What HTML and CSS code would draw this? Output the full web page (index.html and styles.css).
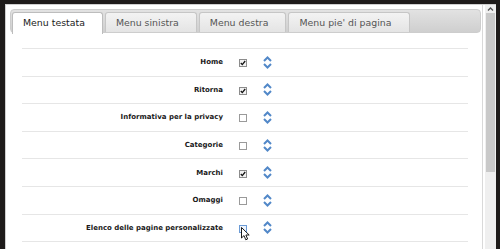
FILE: index.html
```html
<!DOCTYPE html>
<html>
<head>
<meta charset="utf-8">
<link rel="stylesheet" href="styles.css">
</head>
<body>
<div class="dialog">
  <div class="content">
    <div class="tabs">
      <ul class="nav">
        <li class="tab active">Menu testata</li>
        <li class="tab">Menu sinistra</li>
        <li class="tab">Menu destra</li>
        <li class="tab">Menu pie' di pagina</li>
      </ul>
      <div class="panel">
        <div class="row"><span class="label">Home</span><span class="cb"><svg viewBox="0 0 6 6" width="6" height="6"><polyline points="0.8,3 2.3,4.6 5.2,1" /></svg></span><span class="arrows"><svg viewBox="0 0 9 13" width="9" height="13"><polyline points="1,5 4.5,1.5 8,5"/><polyline points="1,8 4.5,11.5 8,8"/></svg></span></div>
        <div class="row"><span class="label">Ritorna</span><span class="cb"><svg viewBox="0 0 6 6" width="6" height="6"><polyline points="0.8,3 2.3,4.6 5.2,1" /></svg></span><span class="arrows"><svg viewBox="0 0 9 13" width="9" height="13"><polyline points="1,5 4.5,1.5 8,5"/><polyline points="1,8 4.5,11.5 8,8"/></svg></span></div>
        <div class="row"><span class="label">Informativa per la privacy</span><span class="cb empty"></span><span class="arrows"><svg viewBox="0 0 9 13" width="9" height="13"><polyline points="1,5 4.5,1.5 8,5"/><polyline points="1,8 4.5,11.5 8,8"/></svg></span></div>
        <div class="row"><span class="label">Categorie</span><span class="cb empty"></span><span class="arrows"><svg viewBox="0 0 9 13" width="9" height="13"><polyline points="1,5 4.5,1.5 8,5"/><polyline points="1,8 4.5,11.5 8,8"/></svg></span></div>
        <div class="row"><span class="label">Marchi</span><span class="cb"><svg viewBox="0 0 6 6" width="6" height="6"><polyline points="0.8,3 2.3,4.6 5.2,1" /></svg></span><span class="arrows"><svg viewBox="0 0 9 13" width="9" height="13"><polyline points="1,5 4.5,1.5 8,5"/><polyline points="1,8 4.5,11.5 8,8"/></svg></span></div>
        <div class="row"><span class="label">Omaggi</span><span class="cb empty"></span><span class="arrows"><svg viewBox="0 0 9 13" width="9" height="13"><polyline points="1,5 4.5,1.5 8,5"/><polyline points="1,8 4.5,11.5 8,8"/></svg></span></div>
        <div class="row"><span class="label">Elenco delle pagine personalizzate</span><span class="cb empty hover"><svg class="cursor" viewBox="0 0 10 15" width="10" height="15"><path d="M0.5,0.5 L0.5,11 L3,8.6 L4.8,12.8 L6.6,12 L4.9,8 L8.2,8 Z"/></svg></span><span class="arrows"><svg viewBox="0 0 9 13" width="9" height="13"><polyline points="1,5 4.5,1.5 8,5"/><polyline points="1,8 4.5,11.5 8,8"/></svg></span></div>
        <div class="row"><span class="label"></span><span class="cb empty"></span><span class="arrows"><svg viewBox="0 0 9 13" width="9" height="13"><polyline points="1,5 4.5,1.5 8,5"/><polyline points="1,8 4.5,11.5 8,8"/></svg></span></div>
      </div>
    </div>
  </div>
  <div class="scrollbar">
    <div class="sb-up"><svg viewBox="0 0 7 4" width="7" height="4"><polyline points="1,3.5 3.5,1 6,3.5"/></svg></div>
    <div class="sb-thumb"></div>
  </div>
</div>
</body>
</html>
```

FILE: styles.css
```css
html, body {
  margin: 0;
  padding: 0;
}
body {
  background: #1e1b1a;
  height: 249px;
  overflow: hidden;
  font-family: "DejaVu Sans", Verdana, sans-serif;
}
.dialog {
  margin: 4px 4px 0 5px;
  height: 245px;
  background: #fff;
  border-left: 1px solid #cfcfcf;
  border-top: 1px solid #cfcfcf;
  box-sizing: border-box;
  display: flex;
  overflow: hidden;
}
.content {
  flex: 1;
  padding: 4px 0 0 4px;
  border-right: 1px solid #d9d9d9;
  margin-right: 2px;
}
.tabs {
  margin-right: 1px;
}
.nav {
  list-style: none;
  margin: 0;
  padding: 2px 0 0 1px;
  height: 24px;
  box-sizing: border-box;
  display: flex;
  align-items: flex-start;
  gap: 2px;
  border: 1px solid #cdcdcd;
  border-radius: 4px;
  background: linear-gradient(#e2e2e2, #cfcfcf);
}
.tab {
  height: 20px;
  box-sizing: border-box;
  padding: 0 17px 0 10px;
  font-size: 9.4px;
  line-height: 19px;
  color: #555;
  border: 1px solid #c6c6c6;
  border-bottom: none;
  border-radius: 3px 3px 0 0;
  background: linear-gradient(#f3f3f3, #e4e4e4);
  white-space: nowrap;
}
.tab.active {
  height: 22px;
  background: #fff;
  color: #222;
  border-color: #bdbdbd;
  line-height: 20px;
}
.panel {
  padding: 15px 13px 0 12px;
}
.row {
  height: 27.6px;
  box-sizing: border-box;
  border-top: 1px solid #e6e6e6;
  display: flex;
  align-items: center;
}
.label {
  width: 201px;
  text-align: right;
  font-size: 7px;
  font-weight: bold;
  color: #1a1a1a;
  white-space: nowrap;
}
.cb {
  position: relative;
  margin-left: 16px;
  margin-top: 2px;
  width: 8px;
  height: 8px;
  box-sizing: border-box;
  border: 1px solid #8c8c8c;
  background: #f2f2f2;
  display: flex;
}
.cb svg polyline {
  fill: none;
  stroke: #111;
  stroke-width: 1.3;
}
.cb.empty {
  background: #fff;
  border-color: #9a9a9a;
}
.cb.hover {
  border-color: #6b9bd6;
  background: #eef4fc;
}
.cursor {
  position: absolute;
  left: 1px;
  top: 1px;
}
.cursor path {
  fill: #fff;
  stroke: #000;
  stroke-width: 0.9;
}
.arrows {
  margin-left: 16px;
  width: 9px;
  height: 13px;
  display: flex;
}
.arrows polyline {
  fill: none;
  stroke: #5288c8;
  stroke-width: 2;
}
.scrollbar {
  width: 11px;
  background: #efefef;
  display: flex;
  flex-direction: column;
  align-items: center;
}
.sb-up {
  height: 8px;
  display: flex;
  align-items: center;
  justify-content: center;
}
.sb-up polyline {
  fill: none;
  stroke: #555;
  stroke-width: 1.3;
}
.sb-thumb {
  width: 9px;
  height: 159px;
  background: #c9c9c9;
}
```
